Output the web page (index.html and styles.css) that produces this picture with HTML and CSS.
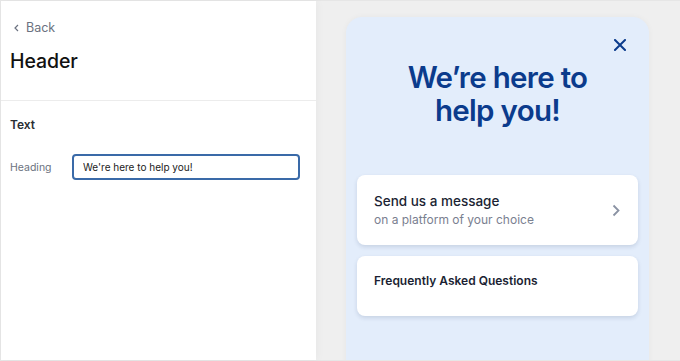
FILE: index.html
```html
<!DOCTYPE html>
<html>
<head>
<meta charset="utf-8">
<link rel="stylesheet" href="styles.css">
</head>
<body>
<div class="app">
  <aside class="sidebar">
    <div class="top">
      <a class="back"><svg width="5" height="8" viewBox="0 0 5 8"><path d="M4 1 L1 4 L4 7" fill="none" stroke="#6b7280" stroke-width="1.2"/></svg><span>Back</span></a>
      <h1 class="title">Header</h1>
    </div>
    <div class="section">
      <h2 class="section-title">Text</h2>
      <div class="field">
        <label class="label">Heading</label>
        <input class="input" type="text" value="We're here to help you!">
      </div>
    </div>
  </aside>
  <main class="preview">
    <div class="widget">
      <div class="close"><svg width="12" height="12" viewBox="0 0 12 12"><path d="M1 1 L11 11 M11 1 L1 11" stroke="#0b3b8c" stroke-width="2" stroke-linecap="square"/></svg></div>
      <h3 class="widget-title">We’re here to<br>help you!</h3>
      <div class="card card-msg">
        <div class="card-text">
          <div class="card-title">Send us a message</div>
          <div class="card-sub">on a platform of your choice</div>
        </div>
        <svg class="chev" width="8" height="13" viewBox="0 0 8 13"><path d="M1.5 1.5 L6.5 6.5 L1.5 11.5" fill="none" stroke="#8a92a3" stroke-width="1.8"/></svg>
      </div>
      <div class="card card-faq">
        <div class="faq-title">Frequently Asked Questions</div>
      </div>
    </div>
  </main>
</div>
</body>
</html>
```

FILE: styles.css
```css
* { box-sizing: border-box; }
html, body { margin: 0; padding: 0; }
body {
  width: 680px;
  height: 361px;
  overflow: hidden;
  background: #efefef;
  font-family: Inter, "Noto Sans", sans-serif;
}
.app {
  display: flex;
  height: 361px;
  border: 1px solid #e6e6e6;
  border-right: none;
}
.sidebar {
  width: 315px;
  flex: none;
  background: #fff;
  position: relative;
  z-index: 1;
  box-shadow: 2px 0 8px rgba(0,0,0,0.03);
}
.top {
  padding: 19px 9px 0 9px;
  height: 100px;
  border-bottom: 1px solid #ececec;
}
.back {
  display: flex;
  align-items: center;
  gap: 7px;
  padding-left: 4px;
  color: #6b7280;
  font-size: 12.5px;
  line-height: 16px;
}
.title {
  margin: 12px 0 0 0;
  font-size: 19.5px;
  font-weight: 500;
  color: #111;
  line-height: 26px;
  letter-spacing: -0.1px;
}
.section {
  padding: 16px 9px 0 9px;
}
.section-title {
  margin: 0;
  font-size: 12px;
  font-weight: 600;
  color: #2a2e33;
  line-height: 16px;
}
.field {
  display: flex;
  align-items: center;
  margin-top: 21px;
}
.label {
  width: 62px;
  font-size: 10.5px;
  color: #6b7280;
}
.input {
  width: 228px;
  height: 26px;
  border: 2px solid #3a6aa8;
  border-radius: 4px;
  padding: 0 9px;
  font-family: Inter, "Noto Sans", sans-serif;
  font-size: 10px;
  color: #222;
  outline: none;
}
.preview {
  flex: 1;
  padding: 16px 30px 0 30px;
  overflow: hidden;
}
.widget {
  width: 303px;
  height: 400px;
  background: #e3edfb;
  border-radius: 16px;
  position: relative;
  padding: 44px 11px 0 11px;
  box-shadow: 0 0 6px rgba(0,0,0,0.04);
}
.close {
  position: absolute;
  top: 22px;
  right: 23px;
  width: 12px;
  height: 12px;
  display: flex;
}
.widget-title {
  margin: 0;
  text-align: center;
  color: #0b3b8c;
  font-size: 29.5px;
  font-weight: 600;
  line-height: 33px;
  letter-spacing: -0.7px;
}
.card {
  background: #fff;
  border-radius: 8px;
  box-shadow: 0 2px 4px rgba(30,50,90,0.14);
  width: 281px;
}
.card-msg {
  margin-top: 48px;
  height: 70px;
  display: flex;
  align-items: center;
  justify-content: space-between;
  padding: 0 18px 0 17px;
}
.card-title {
  font-size: 13.5px;
  font-weight: 500;
  color: #1b1f33;
  line-height: 18px;
}
.card-sub {
  font-size: 12px;
  color: #7a8090;
  line-height: 18px;
  margin-top: 1px;
}
.card-faq {
  margin-top: 11px;
  height: 60px;
  padding: 17px 17px 0 17px;
}
.faq-title {
  font-size: 12px;
  font-weight: 600;
  color: #1b1f33;
  line-height: 16px;
}
```
